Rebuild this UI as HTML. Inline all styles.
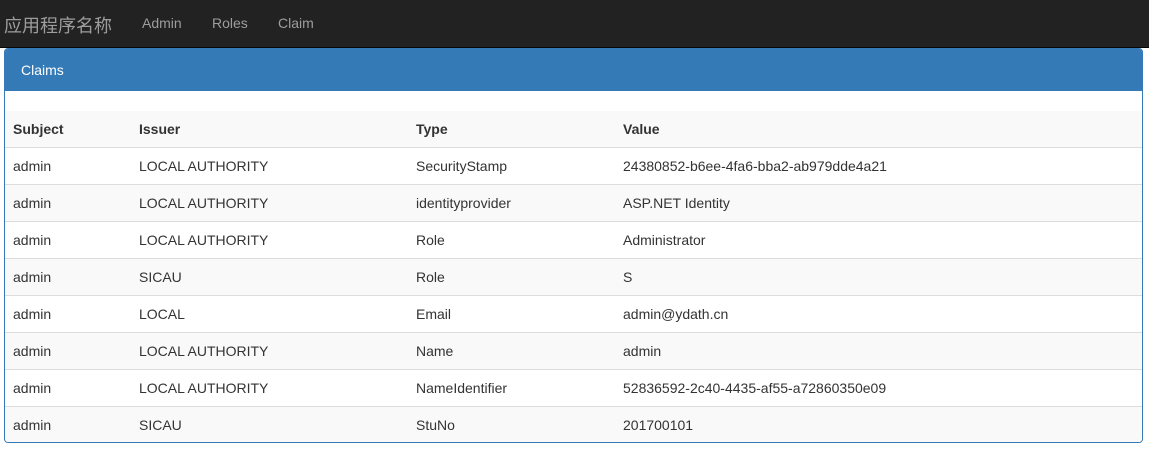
<!DOCTYPE html>
<html><head><meta charset="utf-8"><style>
body{margin:0;font-family:"Liberation Sans","Noto Sans CJK SC",sans-serif;font-size:14px;color:#333;background:#fff;}
.nav{height:48px;background:#222;border-bottom:1px solid #080808;box-sizing:border-box;position:relative}
.nav span{position:absolute;color:#9d9d9d;top:15px;font-size:14px}
.nav .brand{font-size:18px;left:4px;top:12px}
.panel{position:absolute;left:4px;top:48px;width:1139px;height:395px;border:1px solid #337ab7;border-radius:4px;box-sizing:border-box;overflow:hidden}
.ph{background:#337ab7;color:#fff;height:42px;line-height:42px;padding-left:16px;font-size:14px}
table{border-collapse:collapse;width:100%;margin-top:20px}
td,th{height:37px;box-sizing:border-box;padding:0 8px;text-align:left;border-top:1px solid #ddd;vertical-align:middle}
th{border-top:0;border-bottom:1px solid #ddd;font-weight:bold;height:36px}
tr.g{background:#f9f9f9}
</style></head><body>
<div class="nav"><span class="brand">应用程序名称</span><span style="left:142px">Admin</span><span style="left:212px">Roles</span><span style="left:278px">Claim</span></div>
<div class="panel"><div class="ph">Claims</div>
<table>
<colgroup><col style="width:126px"><col style="width:277px"><col style="width:207px"><col></colgroup>
<tr class="g"><th>Subject</th><th>Issuer</th><th>Type</th><th>Value</th></tr>
<tr><td>admin</td><td>LOCAL AUTHORITY</td><td>SecurityStamp</td><td>24380852-b6ee-4fa6-bba2-ab979dde4a21</td></tr>
<tr class="g"><td>admin</td><td>LOCAL AUTHORITY</td><td>identityprovider</td><td>ASP.NET Identity</td></tr>
<tr><td>admin</td><td>LOCAL AUTHORITY</td><td>Role</td><td>Administrator</td></tr>
<tr class="g"><td>admin</td><td>SICAU</td><td>Role</td><td>S</td></tr>
<tr><td>admin</td><td>LOCAL</td><td>Email</td><td>admin@ydath.cn</td></tr>
<tr class="g"><td>admin</td><td>LOCAL AUTHORITY</td><td>Name</td><td>admin</td></tr>
<tr><td>admin</td><td>LOCAL AUTHORITY</td><td>NameIdentifier</td><td>52836592-2c40-4435-af55-a72860350e09</td></tr>
<tr class="g"><td>admin</td><td>SICAU</td><td>StuNo</td><td>201700101</td></tr>
</table></div>
</body></html>
